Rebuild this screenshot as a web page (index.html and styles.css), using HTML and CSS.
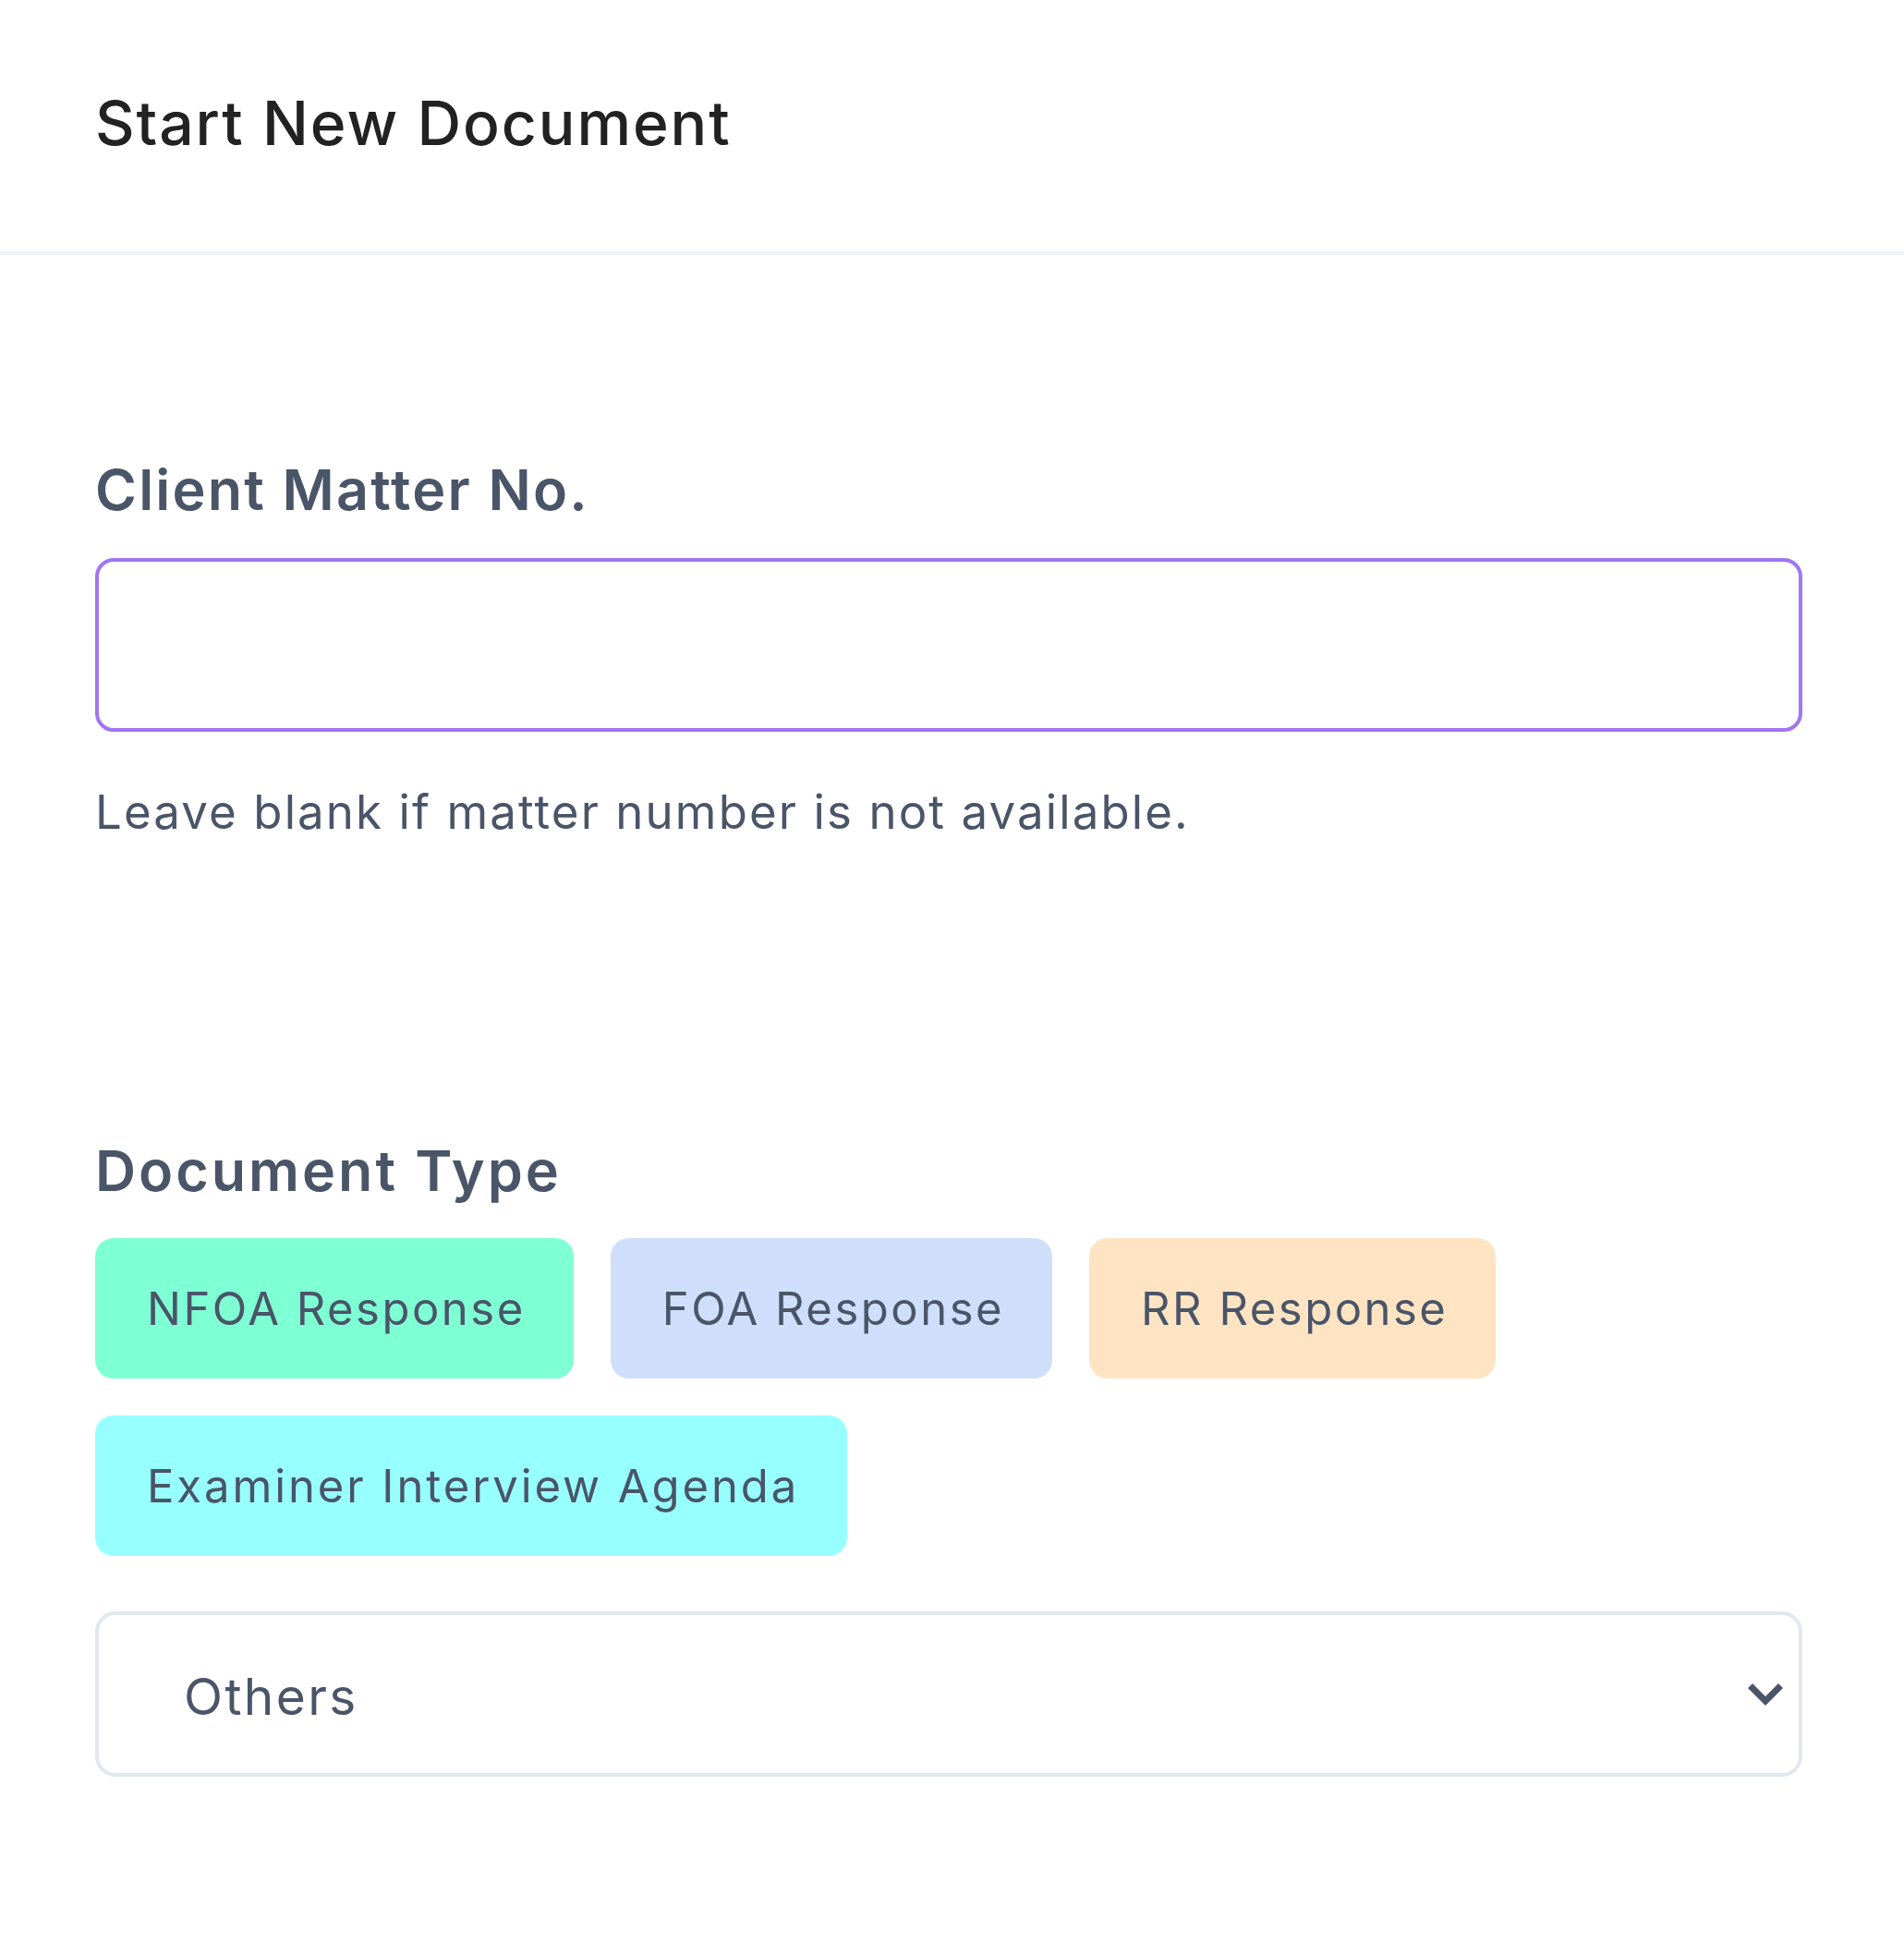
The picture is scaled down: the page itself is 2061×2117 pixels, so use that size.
FILE: index.html
```html
<!DOCTYPE html>
<html lang="en">
<head>
<meta charset="utf-8">
<title>Start New Document</title>
<link rel="stylesheet" href="styles.css">
</head>
<body>
<header class="page-header">
  <h1 class="page-title">Start New Document</h1>
</header>
<main class="form">
  <section class="field field-matter">
    <label class="field-label" for="matter">Client Matter No.</label>
    <input class="text-input" id="matter" type="text">
    <p class="help-text">Leave blank if matter number is not available.</p>
  </section>
  <section class="field field-type">
    <h2 class="field-label field-label-wide">Document Type</h2>
    <div class="chips">
      <button class="chip chip-nfoa" type="button">NFOA Response</button>
      <button class="chip chip-foa" type="button">FOA Response</button>
      <button class="chip chip-rr" type="button">RR Response</button>
      <button class="chip chip-exam" type="button">Examiner Interview Agenda</button>
    </div>
    <div class="select">
      <span class="select-value">Others</span>
      <svg class="select-arrow" width="38" height="24" viewBox="0 0 38 24" aria-hidden="true">
        <polygon points="0,5 5,0 19,14 33,0 38,5 19,24" fill="#4a5568"/>
      </svg>
    </div>
  </section>
</main>
</body>
</html>
```

FILE: styles.css
```css
* { box-sizing: border-box; }

body {
  margin: 0;
  background: #ffffff;
  font-family: "Inter", "Liberation Sans", sans-serif;
  color: #4a5568;
}

.page-header {
  padding: 100px 103px 106px;
  border-bottom: 4px solid #edf2f7;
}

.page-title {
  margin: 0;
  font-size: 66px;
  line-height: 66px;
  font-weight: 500;
  letter-spacing: 1.9px;
  color: #222222;
}

.form {
  width: 1848px;
  margin-left: 103px;
}

.field-matter { padding-top: 224px; }

.field-label {
  display: block;
  margin: 0;
  font-size: 61px;
  line-height: 61px;
  font-weight: 600;
  letter-spacing: 2.2px;
  color: #4a5568;
}

.field-label-wide { letter-spacing: 3px; }

.text-input {
  display: block;
  width: 100%;
  height: 188px;
  margin-top: 43px;
  border: 4px solid #a076f3;
  border-radius: 20px;
  background: #ffffff;
  outline: none;
  font: inherit;
}

.help-text {
  margin: 61px 0 0;
  font-size: 51px;
  line-height: 51px;
  font-weight: 400;
  letter-spacing: 2.1px;
}

.field-type { padding-top: 333px; }

.chips {
  display: flex;
  flex-wrap: wrap;
  gap: 40px;
  margin-top: 42px;
}

.chip {
  display: flex;
  align-items: center;
  height: 152px;
  padding: 0 52px 0 56px;
  border: 0;
  border-radius: 20px;
  font-family: inherit;
  font-size: 49px;
  line-height: 49px;
  font-weight: 400;
  letter-spacing: 2.5px;
  color: #4a5568;
}

.chip-nfoa { background: #7fffd4; }
.chip-foa { background: #cfdffb; }
.chip-rr { background: #ffe4c4; }
.chip-exam { background: #98ffff; letter-spacing: 2.9px; }

.select {
  display: flex;
  align-items: center;
  justify-content: space-between;
  height: 179px;
  margin-top: 60px;
  padding: 6px 17px 0 92px;
  border: 4px solid #e2e8f0;
  border-radius: 22px;
}

.select-value {
  font-size: 55px;
  line-height: 55px;
  font-weight: 400;
  letter-spacing: 2.4px;
  color: #4a5568;
}

.select-arrow { margin-top: -6px; }
```
